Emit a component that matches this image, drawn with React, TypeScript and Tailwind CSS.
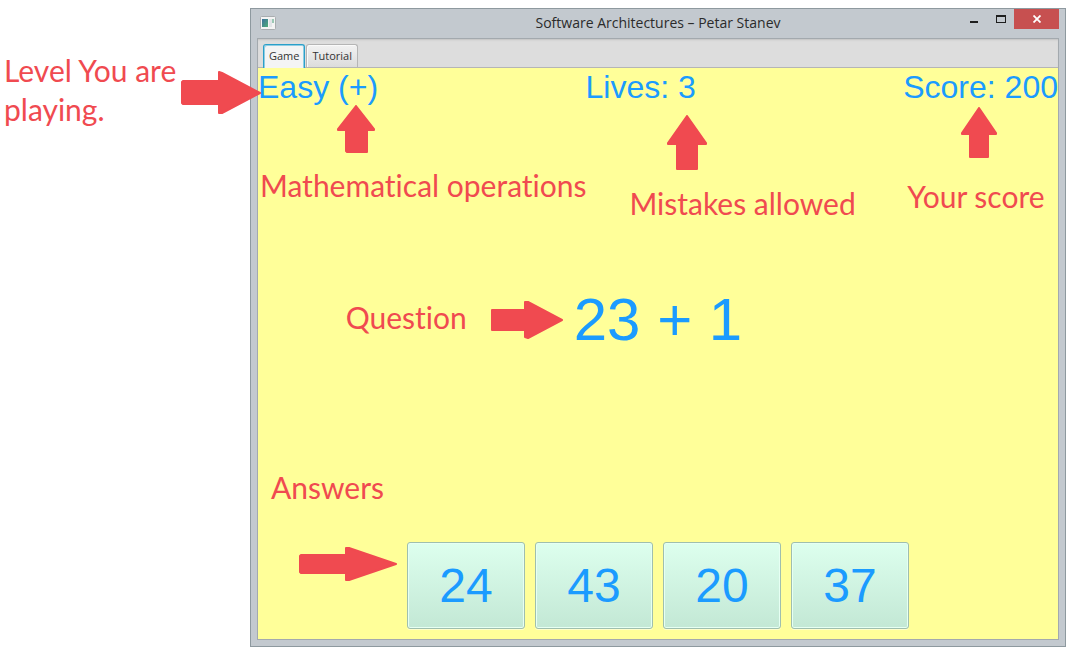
import React, { useState } from "react";

type ArrowProps = { className: string; viewBox: string; d: string };

function Arrow({ className, viewBox, d }: ArrowProps) {
  return (
    <svg aria-hidden="true" className={`absolute ${className}`} viewBox={viewBox}>
      <path d={d} fill="#f04a50" stroke="#f04a50" strokeWidth="2" strokeLinejoin="round" />
    </svg>
  );
}

function Note({ className, children }: { className: string; children: React.ReactNode }) {
  return (
    <p
      className={`absolute whitespace-nowrap font-['Lato',sans-serif] text-[30px] leading-[38px] text-[#f04a50] [font-variant-ligatures:none] ${className}`}
    >
      {children}
    </p>
  );
}

function TitleBar() {
  return (
    <header className="relative flex h-[29px] items-start justify-between">
      <svg aria-hidden="true" className="mt-[7px] ml-[9px] h-[14px] w-4" viewBox="0 0 16 14">
        <defs>
          <linearGradient id="appIcon" x1="0" y1="0" x2="1" y2="1">
            <stop offset="0" stopColor="#3c6f9c" />
            <stop offset="1" stopColor="#4fae78" />
          </linearGradient>
        </defs>
        <rect x="0.5" y="0.5" width="15" height="13" rx="1" fill="#f4f4f4" stroke="#a9adb0" />
        <rect x="2" y="3" width="6" height="8" fill="url(#appIcon)" />
        <rect x="9" y="3" width="3" height="8" fill="#e2e5e8" />
        <rect x="12" y="3" width="2" height="4" fill="#9bc9b5" />
      </svg>
      <h1 className="absolute inset-x-0 top-1 text-center font-['Open_Sans',sans-serif] text-sm leading-5 text-[#2b2b2b]">
        Software Architectures – Petar Stanev
      </h1>
      <div className="relative mr-[6px] flex h-5">
        <button type="button" aria-label="Minimize" className="flex w-[27px] items-center justify-center">
          <svg className="h-[10px] w-[10px]" viewBox="0 0 10 10">
            <rect x="1" y="7" width="8" height="2" fill="#1e1e1e" />
          </svg>
        </button>
        <button type="button" aria-label="Maximize" className="flex w-[27px] items-center justify-center">
          <svg className="h-2 w-[10px]" viewBox="0 0 10 8">
            <path d="M0 0H10V8H0ZM1 2V7H9V2Z" fill="#1e1e1e" fillRule="evenodd" />
          </svg>
        </button>
        <button type="button" aria-label="Close" className="flex w-[45px] items-center justify-center bg-[#c75050]">
          <svg className="h-2 w-2" viewBox="0 0 8 8">
            <path d="M0.5 0.5L7.5 7.5M7.5 0.5L0.5 7.5" stroke="#fff" strokeWidth="1.8" />
          </svg>
        </button>
      </div>
    </header>
  );
}

const tabs = ["Game", "Tutorial"];

function TabBar({ active, onSelect }: { active: string; onSelect: (tab: string) => void }) {
  return (
    <div
      role="tablist"
      className="flex h-[29px] items-end gap-px border-b border-[#b5b5b5] bg-[#dddddd] pl-[5px] shadow-[inset_0_2px_2px_-1px_#c2c2c2]"
    >
      {tabs.map((tab) => (
        <button
          key={tab}
          type="button"
          role="tab"
          aria-selected={tab === active}
          onClick={() => onSelect(tab)}
          className={
            "rounded-t-[3px] font-['Open_Sans',sans-serif] text-[11px] text-[#333333] " +
            (tab === active
              ? "-mb-px h-6 border border-b-0 border-[#2a9fc9] bg-[#f4f4f4] px-[5px] shadow-[inset_1px_1px_0_#8fcde3,inset_-1px_0_0_#8fcde3]"
              : "h-[23px] border border-b-0 border-[#b5b5b5] bg-linear-to-b from-[#f2f2f2] to-[#dcdcdc] px-[5px] shadow-[inset_1px_1px_0_#fafafa]")
          }
        >
          {tab}
        </button>
      ))}
    </div>
  );
}

const answers = [24, 43, 20, 37];

function GameBoard() {
  return (
    <main className="flex flex-1 flex-col bg-[#ffff99] text-[#1b9bff]">
      <div className="flex justify-between text-[32px] leading-[38px]">
        <div className="relative">
          Easy (+)
          <Arrow
            className="top-[2px] -left-[77px] h-11 w-20"
            viewBox="0 0 80 44"
            d="M1 12L2 11H38V2L41 3L79 23L41 43L38 43V34H2L1 33Z"
          />
          <Arrow
            className="top-[37px] left-[79px] h-12 w-10"
            viewBox="0 0 40 48"
            d="M19 1L37 24V25H30V47H10L9 46V25H1V24Z"
          />
          <Note className="top-[98px] left-[2px]">Mathematical operations</Note>
        </div>
        <div className="relative">
          Lives: 3
          <Arrow
            className="top-[47px] left-[82px] h-[55px] w-10"
            viewBox="0 0 40 55"
            d="M20 1L39 28V29H30V54H10V29H1V28Z"
          />
          <Note className="top-[116px] left-11">Mistakes allowed</Note>
        </div>
        <div className="relative">
          Score: 200
          <Arrow
            className="top-[39px] left-[58px] h-[51px] w-9"
            viewBox="0 0 36 51"
            d="M18 1L35 26V27H27V50H9V27H1V26Z"
          />
          <Note className="top-[109px] left-1">Your score</Note>
        </div>
      </div>

      <div className="flex flex-1 items-center justify-center pb-[8px]">
        <div className="relative text-[60px] leading-[68px]">
          23 + 1
          <Arrow
            className="top-[15px] -left-[83px] h-[38px] w-[72px]"
            viewBox="0 0 72 38"
            d="M1 9H34V1L37 1L71 19L37 37L34 36V29H1Z"
          />
          <Note className="top-3 -left-[228px]">Question</Note>
        </div>
      </div>

      <div className="flex justify-center pb-[10px]">
        <div className="relative flex gap-[10px]">
          {answers.map((value) => (
            <button
              key={value}
              type="button"
              className="h-[87px] w-[118px] rounded-[3px] border border-[#9fbfae] bg-linear-to-b from-[#ddffee] to-[#c3e8d5] text-[48px] shadow-[inset_0_0_0_1px_#e6fff3,0_1px_0_#ffffcc]"
            >
              {value}
            </button>
          ))}
          <Arrow
            className="top-[5px] -left-[108px] h-[34px] w-[98px]"
            viewBox="0 0 98 34"
            d="M1 9L2 8H47V1L50 1L97 17L50 33L47 33V26H2L1 25Z"
          />
          <Note className="-top-[74px] -left-[136px]">Answers</Note>
        </div>
      </div>
    </main>
  );
}

export default function App() {
  const [tab, setTab] = useState("Game");
  return (
    <div className="flex min-h-screen bg-white pt-2 pr-[2px] pb-[3px] font-['Liberation_Sans',sans-serif]">
      <aside className="w-[250px] shrink-0 pt-[43px] pl-1">
        <p className="font-['Lato',sans-serif] text-[30px] leading-[39px] text-[#f04a50] [font-variant-ligatures:none]">
          Level You are
          <br />
          playing.
        </p>
      </aside>
      <section className="flex flex-1 flex-col border border-[#8e999f] bg-[#c3c9cf]">
        <TitleBar />
        <div className="mx-[6px] mb-[6px] flex flex-1 flex-col border border-[#a3a9ae]">
          <TabBar active={tab} onSelect={setTab} />
          <GameBoard />
        </div>
      </section>
    </div>
  );
}
